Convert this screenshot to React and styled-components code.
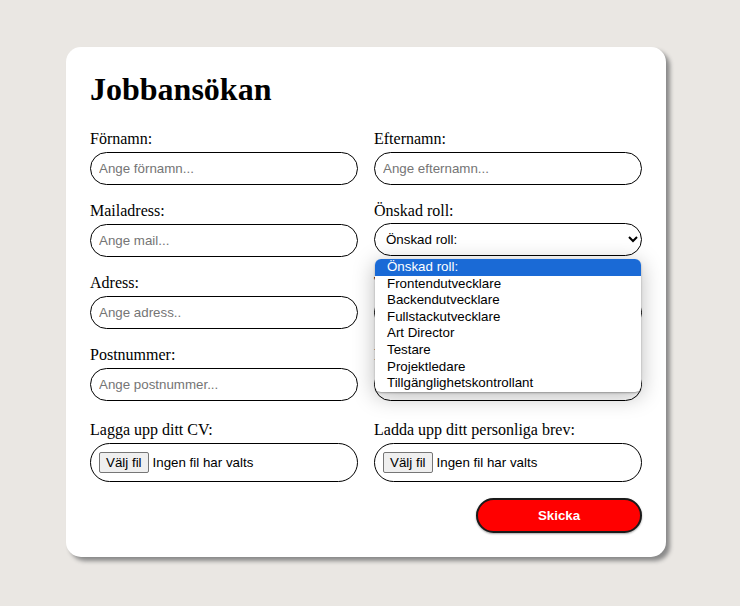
import React from 'react';
import styled, { createGlobalStyle } from 'styled-components';

const GlobalStyle = createGlobalStyle`
  html, body {
    margin: 0;
    padding: 0;
    background: #eae7e3;
  }
  body {
    font-family: 'Liberation Serif', 'Times New Roman', serif;
  }
`;

const Page = styled.div`
  display: flex;
  justify-content: center;
  padding: 47px 8px 0 0;
  min-height: 606px;
  box-sizing: border-box;
`;

const Card = styled.form`
  width: 600px;
  box-sizing: border-box;
  padding: 24px;
  background: #fff;
  border-radius: 15px;
  box-shadow: 4px 4px 4px #8a8a8a;
  align-self: flex-start;
`;

const Title = styled.h1`
  margin: 0 0 22px;
  font-size: 32px;
  line-height: 37px;
  font-weight: bold;
  color: #000;
`;

const Grid = styled.div`
  display: grid;
  grid-template-columns: 1fr 1fr;
  column-gap: 16px;
  row-gap: 17px;
`;

const Field = styled.div`
  position: relative;
  display: flex;
  flex-direction: column;
  margin-top: ${p => p.$offset || 0}px;
`;

const Label = styled.label`
  font-size: 16px;
  line-height: 18px;
  margin-bottom: 4px;
  color: #000;
`;

const TextInput = styled.input`
  box-sizing: border-box;
  height: 33px;
  padding: 8px;
  border: 1px solid #000;
  border-radius: 17px;
  font-family: 'Liberation Sans', Arial, sans-serif;
  font-size: 13.33px;
  outline: none;
  &::placeholder {
    color: #757575;
  }
`;

const Select = styled.select`
  box-sizing: border-box;
  height: 33px;
  margin-top: -1px;
  padding: 0 7px;
  border: 1px solid #000;
  border-radius: 17px;
  background: #fff;
  color: #000;
  font-family: 'Liberation Sans', Arial, sans-serif;
  font-size: 13.33px;
  outline: none;
`;

const OptionList = styled.ul`
  position: absolute;
  top: calc(100% + 2px);
  left: 1px;
  right: 1px;
  z-index: 5;
  margin: 0;
  padding: 0;
  list-style: none;
  background: #fff;
  border-radius: 6px;
  overflow: hidden;
  box-shadow: 0 4px 22px rgba(0, 0, 0, 0.28), 0 1px 2px rgba(0, 0, 0, 0.3);
  font-family: 'Liberation Sans', Arial, sans-serif;
  font-size: 13.33px;
`;

const OptionItem = styled.li`
  height: 16.6px;
  line-height: 16.6px;
  padding-left: 12px;
  color: ${p => (p.$active ? '#fff' : '#000')};
  background: ${p => (p.$active ? '#1a6ad6' : 'transparent')};
`;

const FileBox = styled.div`
  box-sizing: border-box;
  height: 39px;
  display: flex;
  align-items: center;
  gap: 4px;
  padding: 0 8px;
  border: 1px solid #000;
  border-radius: 20px;
  font-family: 'Liberation Sans', Arial, sans-serif;
  font-size: 13.33px;
  color: #000;
`;

const FileButton = styled.span`
  box-sizing: border-box;
  height: 21px;
  padding: 0 6px;
  display: inline-flex;
  align-items: center;
  background: #efefef;
  border: 1px solid #767676;
  border-radius: 2px;
`;

const Actions = styled.div`
  display: flex;
  justify-content: flex-end;
  margin-top: 16px;
`;

const SubmitButton = styled.button`
  width: 166px;
  height: 35px;
  background: #ff0000;
  color: #fff;
  border: 2px solid #1a1a1a;
  border-radius: 18px;
  box-shadow: 0 1px 2px rgba(0, 0, 0, 0.35);
  font-family: 'Liberation Sans', Arial, sans-serif;
  font-size: 13.33px;
  font-weight: bold;
  cursor: pointer;
`;

const roles = [
  'Önskad roll:',
  'Frontendutvecklare',
  'Backendutvecklare',
  'Fullstackutvecklare',
  'Art Director',
  'Testare',
  'Projektledare',
  'Tillgänglighetskontrollant',
];

const TextField = ({ label, placeholder }) => (
  <Field>
    <Label>{label}</Label>
    <TextInput type="text" placeholder={placeholder} />
  </Field>
);

const FileField = ({ label }) => (
  <Field $offset={3}>
    <Label>{label}</Label>
    <FileBox>
      <FileButton>Välj fil</FileButton>
      <span>Ingen fil har valts</span>
    </FileBox>
  </Field>
);

const App = () => (
  <Page>
    <GlobalStyle />
    <Card onSubmit={e => e.preventDefault()}>
      <Title>Jobbansökan</Title>
      <Grid>
        <TextField label="Förnamn:" placeholder="Ange förnamn..." />
        <TextField label="Efternamn:" placeholder="Ange efternamn..." />
        <TextField label="Mailadress:" placeholder="Ange mail..." />
        <Field>
          <Label>Önskad roll:</Label>
          <Select defaultValue={roles[0]}>
            {roles.map(r => (
              <option key={r}>{r}</option>
            ))}
          </Select>
          <OptionList>
            {roles.map((r, i) => (
              <OptionItem key={r} $active={i === 0}>
                {r}
              </OptionItem>
            ))}
          </OptionList>
        </Field>
        <TextField label="Adress:" placeholder="Ange adress.." />
        <TextField label="Telefon:" placeholder="Ange telefonnummer..." />
        <TextField label="Postnummer:" placeholder="Ange postnummer..." />
        <TextField label="Postort:" placeholder="Ange postort..." />
        <FileField label="Lagga upp ditt CV:" />
        <FileField label="Ladda upp ditt personliga brev:" />
      </Grid>
      <Actions>
        <SubmitButton type="submit">Skicka</SubmitButton>
      </Actions>
    </Card>
  </Page>
);

export default App;
